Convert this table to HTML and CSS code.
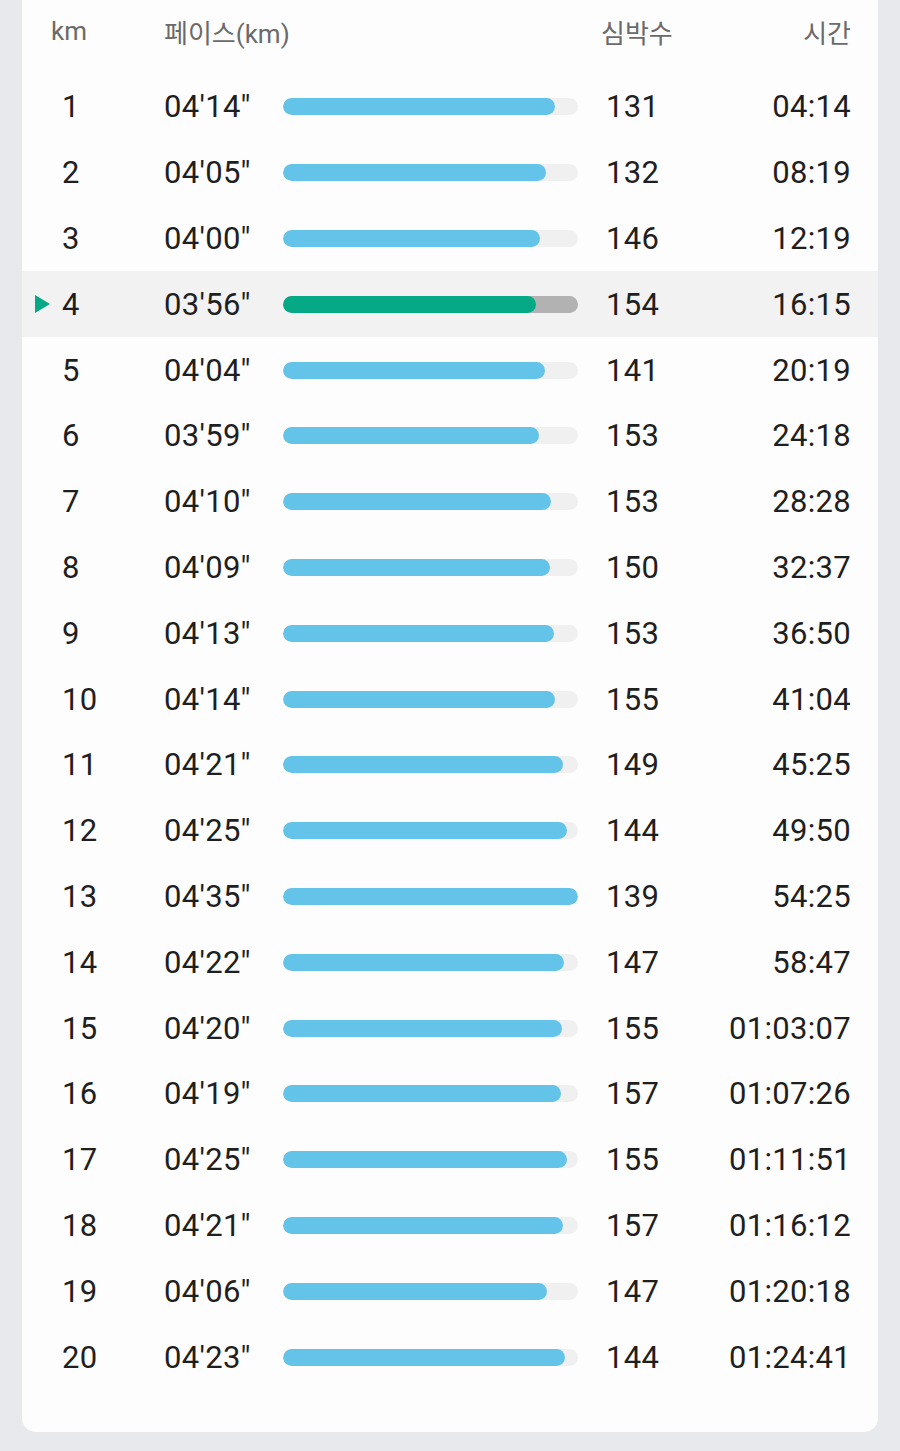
FILE: index.html
```html
<!DOCTYPE html>
<html lang="ko">
<head>
<meta charset="utf-8">
<title>구간 기록</title>
<link rel="stylesheet" href="styles.css">
</head>
<body>
<div class="page">
  <section class="card">
    <div class="row head">
      <div class="c-km">km</div>
      <div class="c-pace">페이스(km)</div>
      <div class="c-bar"></div>
      <div class="c-hr">심박수</div>
      <div class="c-time">시간</div>
    </div>
    <div class="row"><div class="c-km">1</div><div class="c-pace">04'14"</div><div class="c-bar"><div class="track"><div class="fill" style="width:92.36%"></div></div></div><div class="c-hr">131</div><div class="c-time">04:14</div></div>
    <div class="row"><div class="c-km">2</div><div class="c-pace">04'05"</div><div class="c-bar"><div class="track"><div class="fill" style="width:89.09%"></div></div></div><div class="c-hr">132</div><div class="c-time">08:19</div></div>
    <div class="row"><div class="c-km">3</div><div class="c-pace">04'00"</div><div class="c-bar"><div class="track"><div class="fill" style="width:87.27%"></div></div></div><div class="c-hr">146</div><div class="c-time">12:19</div></div>
    <div class="row active"><div class="c-km">4</div><div class="c-pace">03'56"</div><div class="c-bar"><div class="track"><div class="fill" style="width:85.82%"></div></div></div><div class="c-hr">154</div><div class="c-time">16:15</div></div>
    <div class="row"><div class="c-km">5</div><div class="c-pace">04'04"</div><div class="c-bar"><div class="track"><div class="fill" style="width:88.73%"></div></div></div><div class="c-hr">141</div><div class="c-time">20:19</div></div>
    <div class="row"><div class="c-km">6</div><div class="c-pace">03'59"</div><div class="c-bar"><div class="track"><div class="fill" style="width:86.91%"></div></div></div><div class="c-hr">153</div><div class="c-time">24:18</div></div>
    <div class="row"><div class="c-km">7</div><div class="c-pace">04'10"</div><div class="c-bar"><div class="track"><div class="fill" style="width:90.91%"></div></div></div><div class="c-hr">153</div><div class="c-time">28:28</div></div>
    <div class="row"><div class="c-km">8</div><div class="c-pace">04'09"</div><div class="c-bar"><div class="track"><div class="fill" style="width:90.55%"></div></div></div><div class="c-hr">150</div><div class="c-time">32:37</div></div>
    <div class="row"><div class="c-km">9</div><div class="c-pace">04'13"</div><div class="c-bar"><div class="track"><div class="fill" style="width:92.00%"></div></div></div><div class="c-hr">153</div><div class="c-time">36:50</div></div>
    <div class="row"><div class="c-km">10</div><div class="c-pace">04'14"</div><div class="c-bar"><div class="track"><div class="fill" style="width:92.36%"></div></div></div><div class="c-hr">155</div><div class="c-time">41:04</div></div>
    <div class="row"><div class="c-km">11</div><div class="c-pace">04'21"</div><div class="c-bar"><div class="track"><div class="fill" style="width:94.91%"></div></div></div><div class="c-hr">149</div><div class="c-time">45:25</div></div>
    <div class="row"><div class="c-km">12</div><div class="c-pace">04'25"</div><div class="c-bar"><div class="track"><div class="fill" style="width:96.36%"></div></div></div><div class="c-hr">144</div><div class="c-time">49:50</div></div>
    <div class="row"><div class="c-km">13</div><div class="c-pace">04'35"</div><div class="c-bar"><div class="track"><div class="fill" style="width:100%"></div></div></div><div class="c-hr">139</div><div class="c-time">54:25</div></div>
    <div class="row"><div class="c-km">14</div><div class="c-pace">04'22"</div><div class="c-bar"><div class="track"><div class="fill" style="width:95.27%"></div></div></div><div class="c-hr">147</div><div class="c-time">58:47</div></div>
    <div class="row"><div class="c-km">15</div><div class="c-pace">04'20"</div><div class="c-bar"><div class="track"><div class="fill" style="width:94.55%"></div></div></div><div class="c-hr">155</div><div class="c-time">01:03:07</div></div>
    <div class="row"><div class="c-km">16</div><div class="c-pace">04'19"</div><div class="c-bar"><div class="track"><div class="fill" style="width:94.18%"></div></div></div><div class="c-hr">157</div><div class="c-time">01:07:26</div></div>
    <div class="row"><div class="c-km">17</div><div class="c-pace">04'25"</div><div class="c-bar"><div class="track"><div class="fill" style="width:96.36%"></div></div></div><div class="c-hr">155</div><div class="c-time">01:11:51</div></div>
    <div class="row"><div class="c-km">18</div><div class="c-pace">04'21"</div><div class="c-bar"><div class="track"><div class="fill" style="width:94.91%"></div></div></div><div class="c-hr">157</div><div class="c-time">01:16:12</div></div>
    <div class="row"><div class="c-km">19</div><div class="c-pace">04'06"</div><div class="c-bar"><div class="track"><div class="fill" style="width:89.45%"></div></div></div><div class="c-hr">147</div><div class="c-time">01:20:18</div></div>
    <div class="row"><div class="c-km">20</div><div class="c-pace">04'23"</div><div class="c-bar"><div class="track"><div class="fill" style="width:95.64%"></div></div></div><div class="c-hr">144</div><div class="c-time">01:24:41</div></div>
  </section>
</div>
</body>
</html>
```

FILE: styles.css
```css
* { box-sizing: border-box; }

html, body {
  margin: 0;
  padding: 0;
  background: #e8e9ed;
}

body {
  font-family: Roboto, "Noto Sans CJK KR", "Noto Sans", sans-serif;
  color: #1f1f1f;
  height: 1451px;
  overflow: hidden;
}

.page {
  padding: 0 22px;
}

.card {
  background: #fdfdfd;
  border-radius: 0 0 14px 14px;
  padding-bottom: 42px;
}

.row {
  display: grid;
  grid-template-columns: 102px 119px 295px 1fr auto;
  align-items: center;
  height: 65.8px;
  padding: 0 27px 0 40px;
  font-size: 31px;
  letter-spacing: 0.3px;
  white-space: nowrap;
}

.row.head {
  height: 62px;
  margin-bottom: 12px;
  font-family: Roboto, "Noto Sans CJK KR", sans-serif;
  font-size: 26px;
  color: #6a6a6a;
  letter-spacing: 0;
}

.row.head .c-km { margin-left: -11px; }
.row.head .c-hr { padding-left: 23px; }

.c-km { position: relative; }

.c-hr { padding-left: 28px; }

.c-time { text-align: right; }

.track {
  height: 17px;
  border-radius: 9px;
  background: #f0f0f0;
  overflow: hidden;
}

.fill {
  height: 100%;
  border-radius: 9px;
  background: #63c3e8;
}

.row.active {
  background: #f2f2f2;
}

.row.active .track { background: #b2b2b2; }
.row.active .fill { background: #05a985; }

.row.active .c-km::before {
  content: "";
  position: absolute;
  left: -27px;
  top: 50%;
  margin-top: -9px;
  width: 0;
  height: 0;
  border-top: 9px solid transparent;
  border-bottom: 9px solid transparent;
  border-left: 15px solid #05a985;
}
```
